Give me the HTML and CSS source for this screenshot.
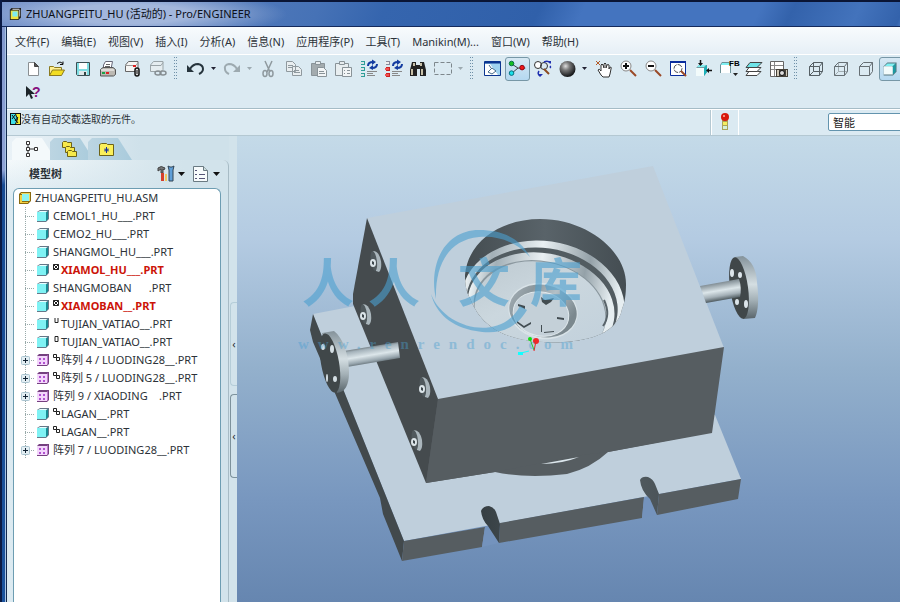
FILE: index.html
```html
<!DOCTYPE html>
<html lang="zh-CN">
<head>
<meta charset="utf-8">
<title>ZHUANGPEITU_HU (活动的) - Pro/ENGINEER</title>
<link rel="stylesheet" href="styles.css">
</head>
<body>
<svg class="defs" aria-hidden="true">
  <symbol id="part" viewBox="0 0 12 12"><path d="M0 2 3 0h9v9l-3 3H0z" fill="#678"/><path d="M1 2 3 1h8L9 2z" fill="#e8ffff"/><path d="M9 3l2-2v8l-2 2z" fill="#168c94"/><path d="M0 2h9v9H0z" fill="#7ff2f4"/></symbol>
  <symbol id="pattern" viewBox="0 0 12 12"><path d="M0 2 2 0h10v10l-2 2H0z" fill="#75407f"/><path d="M0 2h10v9H0z" fill="#f3d6fb"/><path d="M10 2l1-1v9l-1 1z" fill="#c17bd0"/><path d="M2 4h2v2H2zM6 4h2v2H6zM2 8h2v2H2zM6 8h2v2H6z" fill="#b050d0"/></symbol>
  <symbol id="asm" viewBox="0 0 12 12"><path d="M0 2 2 0h10v9l-3 3H0z" fill="#8a6a10"/><path d="M1 3h2v7h6v1H1z" fill="#f4d040"/><path d="M3 2h7v7H3z" fill="#8cf4f2"/><path d="M2 1h9v1H2zM10 2h1v7h-1z" fill="#f0d860"/></symbol>
  <symbol id="plus" viewBox="0 0 9 9"><rect x=".5" y=".5" width="8" height="8" rx="1" fill="#e3eef3" stroke="#a9c3cf"/><path d="M2 4h5v1H2zM4 2h1v5H4z" fill="#123"/></symbol>
  <symbol id="box" viewBox="0 0 6 8"><path d="M1.500 1.500h3v5h-3z" fill="none" stroke="#222"/></symbol>
  <symbol id="cup" viewBox="0 0 6 8"><path d="M1.500 1v4.500h3V1" fill="none" stroke="#222"/></symbol>
  <symbol id="boxes" viewBox="0 0 7 8"><path d="M.5 1.500h3v3h-3zM3.500 4.500h3v3h-3z" fill="none" stroke="#222"/></symbol>
  <symbol id="hatched" viewBox="0 0 7 8"><path d="M.5 1.500h5v5h-5zM.5 1.500l5 5m0-5-5 5" fill="none" stroke="#222"/></symbol>
</svg>

<div class="window">
  <header class="titlebar">
    <svg class="app-icon" viewBox="0 0 14 14"><path d="M1 2 3 0h11v11l-3 3H1z" fill="#222"/><path d="M2 3h9v10H2z" fill="#f1e33c"/><path d="M4 1h8v1H4zM12 2h1v8h-1z" fill="#ddd"/><path d="M4 4h6v6H4z" fill="#7cecf0"/></svg>
    <h1>ZHUANGPEITU_HU (活动的) - Pro/ENGINEER</h1>
  </header>

  <nav class="menubar">
    <a href="#">文件(F)</a><a href="#">编辑(E)</a><a href="#">视图(V)</a><a href="#">插入(I)</a><a href="#">分析(A)</a><a href="#">信息(N)</a><a href="#">应用程序(P)</a><a href="#">工具(T)</a><a href="#">Manikin(M)...</a><a href="#">窗口(W)</a><a href="#">帮助(H)</a>
  </nav>

  <div class="toolbars">
    <span class="grip"></span>
    <div class="tool-rows">
    <div class="tools">
      <button aria-label="新建"><svg viewBox="0 0 25 24"><path d="M7.500 5.500h6l4 4v9h-10z" fill="#fff" stroke="#8a8f92"/><path d="M13.500 5.500v4h4z" fill="#555" stroke="#444"/></svg></button>
      <button aria-label="打开"><svg viewBox="0 0 25 24"><path d="M3.500 19V9.500h4l1 1h7V14" fill="#ffef90" stroke="#8b7a20"/><path d="M3.500 18.500l3-5.500h12l-3 5.500z" fill="#f2dd22" stroke="#8b7a20"/><path d="M11 6.500q3-3 6 0m0-2v3h-3" fill="none" stroke="#111"/></svg></button>
      <button aria-label="保存"><svg viewBox="0 0 25 24"><path d="M5.500 5.500h13v13h-12l-1-1z" fill="#7fdde2" stroke="#3c5055"/><path d="M8 6h8v6H8z" fill="#fff"/><path d="M8 14h8v4H8z" fill="#dfe8ea"/><path d="M13 15h2v3h-2z" fill="#344"/></svg></button>
      <button aria-label="打印"><svg viewBox="0 0 25 24"><path d="M7.500 12V8l2-3.500h7L15 12z" fill="#fff" stroke="#667"/><path d="M10 7.500h4M9 9.500h5" stroke="#666"/><path d="M4.500 12.500 7 10.500h10l2.500 2v5l-2 1.500h-13z" fill="#bcb9b3" stroke="#555"/><path d="M5 13h13" stroke="#fff"/><path d="M6 15h3v2H6z" fill="#1ba34a"/><path d="M10 15h3v2h-3z" fill="#d22"/></svg></button>
      <button aria-label="发送邮件"><svg viewBox="0 0 25 24"><path d="M4.500 14.500V8l3-3.500h9.500v8l-2 2z" fill="#f6f6f4" stroke="#666"/><path d="M4 8.500h11l2-3" fill="none" stroke="#999"/><path d="M12 8h3v2h-3z" fill="#d22"/><rect x="14" y="11" width="4" height="8" rx="2" fill="#ddd" stroke="#111" stroke-width="1.500"/><path d="M16 13v4" stroke="#111"/></svg></button>
      <button aria-label="发送链接"><svg viewBox="0 0 25 24"><path d="M4.500 14.500V8l3-3.500h9.500v8l-2 2z" fill="#e5edf0" stroke="#9aa4a8"/><path d="M4 8.500h11l2-3" fill="none" stroke="#9aa4a8"/><ellipse cx="12" cy="16" rx="3" ry="2" fill="none" stroke="#868e92" stroke-width="1.500"/><ellipse cx="17" cy="16" rx="3" ry="2" fill="none" stroke="#868e92" stroke-width="1.500"/></svg></button>
      <span class="sep"></span>
      <button aria-label="撤消"><svg viewBox="0 0 25 24"><path d="M6 12q3-5 8-5 5 1 5 5 0 3-4 5" fill="none" stroke="#26343c" stroke-width="2"/><path d="M3 8v7h7z" fill="#26343c"/></svg></button>
      <button class="caret" aria-label="撤消列表"><svg viewBox="0 0 11 24"><path d="M2 10h5L4.500 13z" fill="#223"/></svg></button>
      <button aria-label="重做"><svg viewBox="0 0 25 24"><path d="M17 12q-3-5-8-5-5 1-4 5 0 3 4 5" fill="none" stroke="#9daab0" stroke-width="2"/><path d="M20 8v7h-7z" fill="#9daab0"/></svg></button>
      <button class="caret" aria-label="重做列表"><svg viewBox="0 0 11 24"><path d="M2 10h5L4.500 13z" fill="#9daab0"/></svg></button>
      <button aria-label="剪切"><svg viewBox="0 0 25 24"><path d="M9 4l5 11M16 4l-5 11" stroke="#8f999e" stroke-width="1.500"/><ellipse cx="9" cy="16.500" rx="2" ry="3" fill="none" stroke="#8f999e" stroke-width="1.500"/><ellipse cx="15" cy="16.500" rx="2" ry="3" fill="none" stroke="#8f999e" stroke-width="1.500"/></svg></button>
      <button aria-label="复制"><svg viewBox="0 0 25 24"><g fill="#e9eef0" stroke="#8f999e"><path d="M5.500 4.500h6l3 3v7h-9zM11.500 9.500h6l3 3v6h-9z"/><path d="M7 8.500h5M7 10.500h4M13 13.500h5M13 15.500h6"/></g></svg></button>
      <button aria-label="粘贴"><svg viewBox="0 0 25 24"><path d="M5.500 6.500h13v12h-13z" fill="#a3abae" stroke="#899398"/><path d="M9.500 4.500h5v3h-5z" fill="#e7ecee" stroke="#899398"/><path d="M11.500 10.500h6l3 3v6h-9z" fill="#f2f5f6" stroke="#899398"/><path d="M13 14.500h5M13 16.500h6" stroke="#899398"/></svg></button>
      <button aria-label="选择性粘贴"><svg viewBox="0 0 25 24"><path d="M4.500 6.500h13v12h-13z" fill="#e8eef0" stroke="#899398"/><path d="M8.500 4.500h5v3h-5z" fill="#e7ecee" stroke="#899398"/><path d="M11.500 10.500h9v9h-9z" fill="#f2f5f6" stroke="#899398"/><path d="M13 13.500h1m2 0h3m-6 3h1m2 0h3" stroke="#899398"/></svg></button>
      <button aria-label="再生"><svg viewBox="0 0 25 24"><path d="M5 4h4v4H5zM5 10h4v4H5zM5 16h4v4H5z" fill="#2e9d98"/><path d="M4 5h4v2H4zM4 11h4v2H4zM4 17h4v2H4z" fill="#d8e4e6"/><path d="M12 9q0-4 5-4m4 2q0 4-5 4" fill="none" stroke="#143ca0" stroke-width="2"/><path d="M16 2.500l4 2.500-4 3zM17 8v5l-4-2z" fill="#143ca0"/><path d="M11 14.500h10M11 16.500h6M11 18.500h8" stroke="#888"/></svg></button>
      <button aria-label="自定义再生"><svg viewBox="0 0 25 24"><path d="M5 4h4v4H5z" fill="#889"/><path d="M5 10h4v4H5zM5 16h4v4H5z" fill="#c22"/><path d="M4 5h4v2H4z" fill="#eee"/><path d="M4 11h4v2H4zM4 17h4v2H4z" fill="#f05050"/><path d="M12 9q0-4 5-4m4 2q0 4-5 4" fill="none" stroke="#143ca0" stroke-width="2"/><path d="M16 2.500l4 2.500-4 3zM17 8v5l-4-2z" fill="#143ca0"/><path d="M11 14.500h10M11 16.500h6M11 18.500h8" stroke="#888"/></svg></button>
      <button aria-label="查找"><svg viewBox="0 0 25 24"><path d="M6 5h4v3h4V5h4l2 8v6h-6v-7h-3v7H4v-6z" fill="#222"/><path d="M6 12v6M16 12v6M8 6v3M15 6v3" stroke="#c8c0a8" stroke-width="2"/></svg></button>
      <button aria-label="选取框"><svg viewBox="0 0 25 24"><path d="M3.500 5.500h17v12h-17z" fill="none" stroke="#7d878c" stroke-dasharray="4 2"/></svg></button>
      <button class="caret" aria-label="选取列表"><svg viewBox="0 0 11 24"><path d="M2 10h5L4.500 13z" fill="#9daab0"/></svg></button>
      <span class="sep"></span>
      <button aria-label="重画"><svg viewBox="0 0 25 24"><path d="M4.500 4.500h16v14h-16z" fill="#9fd2f0" stroke="#0b3590"/><path d="M5 5h15v1.500H5z" fill="#0b3590"/><path d="M5 18V7h5l8 11z" fill="#fff"/><path d="M9 8l2 3M8 15l4-4 4 3-4 3z" stroke="#456a8a" fill="#fff"/></svg></button>
      <button class="pressed" aria-label="旋转中心"><svg viewBox="0 0 25 24"><path d="M7 7l6 4h8M13 11l-6 5" fill="none" stroke="#333"/><circle cx="6" cy="6" r="2.500" fill="#16c020" stroke="#064"/><circle cx="17.500" cy="10.500" r="2.500" fill="#f01818" stroke="#801"/><circle cx="6" cy="16.500" r="2.500" fill="#18e0e8" stroke="#067"/></svg></button>
      <button aria-label="定向模式"><svg viewBox="0 0 25 24"><circle cx="8" cy="8" r="3.500" fill="#fff" stroke="#333"/><circle cx="14" cy="9" r="3.500" fill="none" stroke="#333"/><path d="M14 12l5 5" stroke="#8a4a20" stroke-width="2"/><path d="M14 5q4-2 6 1m0 5q1-1 0-2M9 14q-2 3 1 5" fill="none" stroke="#2030b0" stroke-width="1.500"/><path d="M18 4h3v3zM8 17h5l-3 3z" fill="#2030b0"/></svg></button>
      <button aria-label="外观库"><svg viewBox="0 0 25 24"><defs><radialGradient id="ball" cx=".38" cy=".32" r=".65"><stop offset="0" stop-color="#ddd"/><stop offset=".4" stop-color="#777"/><stop offset="1" stop-color="#1a1c1e"/></radialGradient></defs><circle cx="12.500" cy="12" r="8" fill="url(#ball)"/></svg></button>
      <button class="caret" aria-label="外观列表"><svg viewBox="0 0 11 24"><path d="M2 10h5L4.500 13z" fill="#223"/></svg></button>
      <button aria-label="平移"><svg viewBox="0 0 25 24"><path d="M10 18l-3-5q1-2 3 1V8q1-2 2 0l1 3V7q1-2 2 0v4l1-3q1-1 2 0v4l1-2q2 0 1 2l-1 5-1 3h-6z" fill="#fff" stroke="#333"/><path d="M5 4l4 4M9 4 5 8" stroke="#b05a28"/></svg></button>
      <button aria-label="放大"><svg viewBox="0 0 25 24"><path d="M14 13l6 6" stroke="#9a4a28" stroke-width="2"/><circle cx="10" cy="9" r="5" fill="#fff" stroke="#888"/><path d="M7 9h6M10 6v6" stroke="#111" stroke-width="2"/></svg></button>
      <button aria-label="缩小"><svg viewBox="0 0 25 24"><path d="M14 13l6 6" stroke="#9a4a28" stroke-width="2"/><circle cx="10" cy="9" r="5" fill="#fff" stroke="#888"/><path d="M7 9h6" stroke="#111" stroke-width="2"/></svg></button>
      <button aria-label="重新调整"><svg viewBox="0 0 25 24"><path d="M4.500 4.500h15v14h-15z" fill="#fff" stroke="#0a2c9c"/><path d="M4 4h16v2H4z" fill="#0a2c9c"/><circle cx="12" cy="11.500" r="4" fill="#fff" stroke="#555" stroke-dasharray="5 1"/><path d="M15 14l5 5" stroke="#9a4a28" stroke-width="2"/></svg></button>
      <button aria-label="重定向"><svg viewBox="0 0 25 24"><path d="M5 11l3-3h8v7l-3 4H5z" fill="#78969e"/><path d="M5 11h8v8H5z" fill="#f2fbfb"/><path d="M6 10l2-2h7l-2 2z" fill="#7ff0f2"/><path d="M13 11l3-3v7l-3 4z" fill="#1bb0b8"/><path d="M9.500 3v5M21 13.500h-4" stroke="#111" stroke-width="1.500"/><path d="M7 6h5L9.500 9zM18 11v5l-3-2.500z" fill="#111"/></svg></button>
      <button aria-label="已保存视图"><svg viewBox="0 0 25 24"><path d="M4 8l2-3h7l2 3v8H4z" fill="#6c9096"/><path d="M5 8h9v8H5z" fill="#fff"/><path d="M6 6h7l1 2H5z" fill="#7ff0f2"/><path d="M17 16h5l-2.500 3z" fill="#222"/><text class="micro" x="13" y="9">FB</text></svg></button>
      <button aria-label="层"><svg viewBox="0 0 25 24"><g stroke="#444"><path d="M5 18.500l3-4h12l-4 4z" fill="#fff"/><path d="M5 14.500l3-4h12l-4 4z" fill="#fff"/><path d="M5 10.500l4-5h12l-5 5z" fill="#6ee4e8"/></g></svg></button>
      <button aria-label="视图管理器"><svg viewBox="0 0 25 24"><path d="M4.500 4.500h13v15h-13z" fill="#fff" stroke="#666"/><path d="M8.500 5v14M5 8.500h12M5 12.500h12" stroke="#888"/><path d="M10 12h12v8H10z" fill="#46423a"/><circle cx="16" cy="16" r="2.500" fill="#ddd" stroke="#111"/><path d="M11 13h2v6h-2zM20 13h1v6h-1z" fill="#cfc8b8"/></svg></button>
      <span class="sep"></span>
      <button aria-label="线框"><svg viewBox="0 0 25 24"><path d="M5.500 9.500h10v9h-10zM9.500 5.500h9v9h-9zM5.500 9.500l4-4M15.500 9.500l3-4M15.500 18.500l3-4M5.500 18.500l4-4" fill="none" stroke="#555f64"/></svg></button>
      <button aria-label="隐藏线"><svg viewBox="0 0 25 24"><path d="M9.500 5.500v9h9M5.500 18.500l4-4" fill="none" stroke="#a2adb2"/><path d="M5.500 9.500h10v9h-10zM5.500 9.500l4-4h9v9l-3 4M15.500 9.500l3-4" fill="none" stroke="#666f74"/></svg></button>
      <button aria-label="消隐"><svg viewBox="0 0 25 24"><path d="M5.500 9.500h10v9h-10zM5.500 9.500l4-4h9v9l-3 4M15.500 9.500l3-4" fill="none" stroke="#666f74"/></svg></button>
      <button class="pressed" aria-label="着色"><svg viewBox="0 0 25 24"><path d="M4 9l4-4h10v10l-4 4H4z" fill="#56777f"/><path d="M5 9l3-3h9l-3 3z" fill="#7ef0f2"/><path d="M4 9h10v9H4z" fill="#f2fbfb"/><path d="M14 9l3-3v9l-3 3z" fill="#1b9aa2"/></svg></button>
    </div>
    <div class="tools">
      <button aria-label="上下文帮助"><svg viewBox="0 0 25 24"><path d="M5 5v11l3-3 2 5 2-1-2-4h4z" fill="#1c2428"/><text class="help-mark" x="11" y="16">?</text></svg></button>
    </div>
    </div>
  </div>

  <div class="status">
    <svg class="status-icon" viewBox="0 0 11 12"><path d="M0 0h11v12H0z" fill="#111"/><path d="M1 1h4l2 5-2 5H1z" fill="#40dfe8"/><path d="M6 1h4v10H6l2-5z" fill="#f4ec30"/><path d="M2 2l6 8M5 2 2 6m6-2L5 8" stroke="#111"/></svg>
    <output>没有自动交截选取的元件。</output>
    <span class="signal"><svg viewBox="0 0 10 18"><path d="M2 6h6v11H2z" fill="#a9a458"/><path d="M3 9h4v3H3z" fill="#f5ee60"/><path d="M3 13h4v3H3z" fill="#d6f0d8"/><circle cx="5" cy="4" r="4" fill="#d8180c"/><circle cx="4" cy="3" r="1" fill="#ffb0a0"/></svg></span>
    <select class="filter" aria-label="选取过滤器"><option>智能</option></select>
  </div>

  <main class="work">
    <section class="navigator">
      <div class="tabs">
        <button class="tab active" aria-label="模型树"><svg viewBox="0 0 16 18"><path d="M2.500 1.500h3v3h-3zM2.500 7.500h3v3h-3zM2.500 13.500h3v3h-3zM10.500 7.500h3v3h-3zM6 9h4M4 5v2M4 11v2" fill="#fff" stroke="#333"/></svg></button>
        <button class="tab" aria-label="文件夹浏览器"><svg viewBox="0 0 18 18"><g fill="#f7e94a" stroke="#6d6318"><path d="M1.500 2.500l1-1h3l1 1h4v5h-9z"/><path d="M4.500 7.500l1-1h3l1 1h4v5h-9z"/><path d="M6.500 11.500l1-1h3l1 1h4v5h-9z"/></g></svg></button>
        <button class="tab" aria-label="收藏夹"><svg viewBox="0 0 18 18"><path d="M.5 4.500v11h14v-11h-6l-1-1h-5z" fill="#fbf05a" stroke="#6d6318"/><path d="M7.500 7v6M5 10h5M6 8.500l3 3m0-3-3 3" stroke="#18339a"/></svg></button>
      </div>
      <div class="panel">
        <div class="panel-head">
          <h2>模型树</h2>
          <button aria-label="设置"><svg viewBox="0 0 21 20"><path d="M1 4q3-3 7 0l-1 2-1-1v4H4V5L1 7z" fill="#777" stroke="#444"/><path d="M4 9h3v8H4z" fill="#d6402c"/><path d="M12 17V6l-1-4 2 1h2l2-1-1 4v11z" fill="#5f9fd8" stroke="#345"/><path d="M8 10h2v7H8z" fill="#f0c860"/></svg><svg class="drop" viewBox="0 0 8 20"><path d="M0 8h7l-3.500 4z" fill="#111"/></svg></button>
          <button aria-label="显示"><svg viewBox="0 0 21 20"><path d="M1.500 2.500h10l4 4v11h-14z" fill="#f7fbfc" stroke="#6a7a82"/><path d="M11.500 2.500v4h4" fill="#cdd" stroke="#6a7a82"/><path d="M3 6.500h2M3 10.500h2M3 14.500h2M7 10.500h6M7 14.500h6" stroke="#557"/></svg><svg class="drop" viewBox="0 0 8 20"><path d="M0 8h7l-3.500 4z" fill="#111"/></svg></button>
        </div>
        <div class="tree">
          <div class="row root"><svg class="ico"><use href="#asm"/></svg>ZHUANGPEITU_HU.ASM</div>
          <ul>
            <li class="row"><svg class="ico"><use href="#part"/></svg>CEMOL1_HU___.PRT</li>
            <li class="row"><svg class="ico"><use href="#part"/></svg>CEMO2_HU___.PRT</li>
            <li class="row"><svg class="ico"><use href="#part"/></svg>SHANGMOL_HU___.PRT</li>
            <li class="row failed"><svg class="ico"><use href="#part"/></svg><svg class="mark"><use href="#hatched"/></svg>XIAMOL_HU___.PRT</li>
            <li class="row"><svg class="ico"><use href="#part"/></svg>SHANGMOBAN      .PRT</li>
            <li class="row failed"><svg class="ico"><use href="#part"/></svg><svg class="mark"><use href="#hatched"/></svg>XIAMOBAN__.PRT</li>
            <li class="row"><svg class="ico"><use href="#part"/></svg><svg class="mark"><use href="#cup"/></svg>TUJIAN_VATIAO__.PRT</li>
            <li class="row"><svg class="ico"><use href="#part"/></svg><svg class="mark"><use href="#box"/></svg>TUJIAN_VATIAO__.PRT</li>
            <li class="row group"><button class="plus" aria-label="展开"><svg viewBox="0 0 9 9"><use href="#plus"/></svg></button><svg class="ico"><use href="#pattern"/></svg><svg class="mark"><use href="#boxes"/></svg>阵列 4 / LUODING28__.PRT</li>
            <li class="row group"><button class="plus" aria-label="展开"><svg viewBox="0 0 9 9"><use href="#plus"/></svg></button><svg class="ico"><use href="#pattern"/></svg><svg class="mark"><use href="#boxes"/></svg>阵列 5 / LUODING28__.PRT</li>
            <li class="row group"><button class="plus" aria-label="展开"><svg viewBox="0 0 9 9"><use href="#plus"/></svg></button><svg class="ico"><use href="#pattern"/></svg>阵列 9 / XIAODING    .PRT</li>
            <li class="row"><svg class="ico"><use href="#part"/></svg><svg class="mark"><use href="#boxes"/></svg>LAGAN__.PRT</li>
            <li class="row"><svg class="ico"><use href="#part"/></svg><svg class="mark"><use href="#boxes"/></svg>LAGAN__.PRT</li>
            <li class="row group"><button class="plus" aria-label="展开"><svg viewBox="0 0 9 9"><use href="#plus"/></svg></button><svg class="ico"><use href="#pattern"/></svg>阵列 7 / LUODING28__.PRT</li>
          </ul>
        </div>
      </div>
    </section>
    <div class="splitter">
      <button class="handle" aria-label="折叠浏览器">‹</button>
      <button class="handle dark" aria-label="折叠导航器">‹</button>
    </div>

    <section class="viewport">
      <svg viewBox="237 136 663 466" preserveAspectRatio="xMinYMin meet" role="img" aria-label="装配模型">
        <defs>
          <linearGradient id="rodL" x1="370" y1="346" x2="373" y2="364" gradientUnits="userSpaceOnUse"><stop offset="0" stop-color="#6d777c"/><stop offset=".15" stop-color="#a4b2ba"/><stop offset=".5" stop-color="#dce6ea"/><stop offset=".8" stop-color="#98a6ae"/><stop offset="1" stop-color="#59656b"/></linearGradient>
          <linearGradient id="rodR" x1="720" y1="283" x2="723" y2="301" gradientUnits="userSpaceOnUse"><stop offset="0" stop-color="#87939a"/><stop offset=".4" stop-color="#dce6ea"/><stop offset=".7" stop-color="#a4b0b7"/><stop offset="1" stop-color="#3f4b50"/></linearGradient>
          <linearGradient id="rim" x1="0" y1="0" x2="0" y2="1"><stop offset="0" stop-color="#84929a"/><stop offset=".45" stop-color="#d4dee2"/><stop offset=".7" stop-color="#a3b0b6"/><stop offset="1" stop-color="#58646a"/></linearGradient>
          <linearGradient id="bore" x1="0" y1="0" x2="1" y2="0"><stop offset="0" stop-color="#434b4f"/><stop offset=".5" stop-color="#596369"/><stop offset="1" stop-color="#434c51"/></linearGradient>
          <linearGradient id="ring" x1="0" y1="0" x2="1" y2="0"><stop offset="0" stop-color="#eef4f6"/><stop offset=".15" stop-color="#a3b0b7"/><stop offset=".45" stop-color="#e9f0f3"/><stop offset=".75" stop-color="#94a1a8"/><stop offset=".95" stop-color="#e6eef1"/></linearGradient>
          <linearGradient id="dish" x1="0" y1="0" x2="1" y2="1"><stop offset="0" stop-color="#bcc8cf"/><stop offset=".4" stop-color="#cbd7de"/><stop offset="1" stop-color="#bfcfdb"/></linearGradient>
          <linearGradient id="hub" x1="0" y1="0" x2="1" y2=".3"><stop offset="0" stop-color="#a5b1b8"/><stop offset=".3" stop-color="#8b979d"/><stop offset=".6" stop-color="#b4c0c7"/><stop offset="1" stop-color="#7b888e"/></linearGradient>
          <linearGradient id="slot" x1="0" y1="0" x2="1" y2="0"><stop offset="0" stop-color="#363f43"/><stop offset=".6" stop-color="#5b656a"/><stop offset="1" stop-color="#4b5459"/></linearGradient>
          <clipPath id="boreClip"><path d="M465 275C468 240 503 219 540 219c47 0 86 32 86 65 0 10-1 18-4 25-2 12-12 23-29 28-30 9-78 7-100-9-13-9-19-20-23-30-4-6-5-15-5-23z"/></clipPath>
          <g id="bolt"><path d="M0-11q6 0 8 10 1 8-2 11l-3-1z" fill="#aab6bc"/><ellipse cx="1" cy="-1" rx="3" ry="10" transform="rotate(-8)" fill="#50595d"/><ellipse cx="0" cy="1" rx="3" ry="4" fill="#dce5e9"/><path d="M-1-1l2 1v3l-2-1z" fill="#3d474c"/></g>
        </defs>

        <g class="base">
          <path d="M313 314l42-8 360 109 26 64-337 62z" fill="#bfcfdc"/>
          <path d="M313 314l91 227-2 20-19-47-3-16-67-156-3-12z" fill="#42494c"/>
          <path d="M404 541l81-14-3 20-80 14zM500 523l144-26-2 21-143 25zM659 494l82-15-3 20-81 16z" fill="#565d61"/>
          <path d="M485 527l4-1 10 17-17 4zM644 498l6-1 7 18-15 3z" fill="#7493bd"/>
          <path d="M481 511q2-5 8-5 5 1 7 6l4 12-1 19-11-17q-6-6-7-15zM640 480q2-4 8-3 5 2 7 7l4 10-2 21-7-16q-9-8-10-19z" fill="url(#slot)"/>
        </g>
        <g class="block">
          <path d="M426 483l69-11q32 7 72 2 24-6 41-22l104-20V400H426z" fill="#565d61"/>
          <path d="M367 218l286-52 71 182-286 51z" fill="#bfcfdc"/>
          <path d="M367 218l71 181-12 84-73-179v-10z" fill="#454b4e"/>
          <path d="M438 399l286-52-12 86-104 19-26 3-87 17-69 11z" fill="#565d61"/>
          <path d="M541 464l38-7q-17 7-38 7z" fill="#dce7ed"/>
        </g>
        <g clip-path="url(#boreClip)">
          <path d="M460 210h170v140H460z" fill="url(#bore)"/>
          <ellipse cx="543" cy="304" rx="82" ry="63" transform="rotate(8 543 304)" fill="url(#ring)"/>
          <ellipse cx="542" cy="305" rx="76" ry="57" transform="rotate(8 542 305)" fill="#525c61"/>
          <ellipse cx="541" cy="308" rx="74" ry="55" transform="rotate(10 541 308)" fill="url(#ring)"/>
          <ellipse cx="540" cy="310" rx="67" ry="49" transform="rotate(12 540 310)" fill="#8b989f"/>
          <ellipse cx="540" cy="312" rx="66" ry="50" transform="rotate(12 540 312)" fill="url(#dish)"/>
          <path d="M604 300q7 15-1 26" fill="none" stroke="#59646a" stroke-width="2"/>
        </g>
        <ellipse cx="543" cy="311" rx="35" ry="28" transform="rotate(12 543 311)" fill="#d9e3e8"/>
        <ellipse cx="543" cy="311" rx="34" ry="26" transform="rotate(12 543 311)" fill="url(#hub)"/>
        <ellipse cx="541" cy="314" rx="28" ry="22" transform="rotate(12 541 314)" fill="#c4d0d8" stroke="#dfe8ec"/>
        <path d="M541 297l4 3 9-2-3 4-5 3-4-3zM518 304l7 2v3l-7-3zM517 321l7 5 7-4v2l-7 4-7-5zM541 325v7h1v-7zM544 333l10-1v-1l-10 1zM557 317l7 1v2l-7-1z" fill="#424c51"/>

        <g class="flange">
          <path d="M344 351l54-9 2 16-53 9z" fill="url(#rodL)"/>
          <path d="M322 333l12-2c9 7 15 24 15 42 0 12-4 19-12 20z" fill="url(#rim)"/>
          <ellipse cx="330" cy="363" rx="9" ry="30" transform="rotate(-10 330 363)" fill="#404749"/>
          <g fill="#d4dee3"><ellipse cx="323" cy="347" rx="2" ry="3"/><ellipse cx="332" cy="349" rx="2" ry="4"/><ellipse cx="327" cy="378" rx="1" ry="4"/><ellipse cx="335" cy="379" rx="2" ry="3"/></g>
        </g>
        <g class="flange">
          <path d="M735 257l8-1q13 7 14 26 3 25-2 36l-12 1z" fill="url(#rim)"/>
          <ellipse cx="739" cy="288" rx="9" ry="31" transform="rotate(-8 739 288)" fill="#404749"/>
          <g fill="#dce5ea"><ellipse cx="732" cy="273" rx="2" ry="4"/><ellipse cx="740" cy="275" rx="2" ry="3"/><ellipse cx="737" cy="302" rx="2" ry="3"/><ellipse cx="746" cy="304" rx="2" ry="4"/></g>
          <path d="M700 286l39-7q3 9 1 18l-34 6z" fill="url(#rodR)"/>
        </g>
        <use href="#bolt" x="373" y="262"/><use href="#bolt" x="363" y="315"/><use href="#bolt" x="422" y="388"/><use href="#bolt" x="414" y="441"/>

        <g class="triad" fill="none"><path d="M530 339l4 11" stroke="#2c2"/><path d="M536 341l-2 10" stroke="#e22"/><path d="M521 353l8-2" stroke="#1ff" stroke-width="1"/><circle cx="530" cy="339" r="2" fill="#1d1"/><circle cx="536" cy="341" r="3" fill="#f02828"/><path d="M518 352h5v3h-5z" fill="#1ff"/></g>

        <g class="watermark">
          <path d="M436 299C428 264 445 230 479 230c23 0 41 8 51 27-14-15-32-22-51-20-32 3-44 30-43 62z"/>
          <path d="M431 294c14 36 70 48 89 12l7 4c-14 24-36 24-51 21-25-4-40-18-45-37z"/>
          <text x="302" y="302" class="brand">人</text><text x="368" y="302" class="brand">人</text><text x="458" y="302" class="brand">文</text><text x="530" y="302" class="brand">库</text>
          <text x="298" y="349" class="site">www.renrendoc.com</text>
        </g>
      </svg>
    </section>
  </main>
</div>
</body>
</html>
```
FILE: styles.css
```css
* { box-sizing: border-box; }

body {
  margin: 0;
  overflow: hidden;
  color: #2c3238;
  font: 11px/18px "Noto Sans", "Noto Sans CJK SC", sans-serif;
}

.defs { position: absolute; width: 0; height: 0; }
h1, h2, ul { margin: 0; padding: 0; font-size: 11px; }
svg { display: block; }

button {
  padding: 0;
  border: 0;
  background: none;
  color: inherit;
  font: inherit;
}

.window {
  display: flex;
  flex-direction: column;
  height: 100vh;
  padding-left: 7px;
  background:
    linear-gradient(90deg, #0a1a44 0 2px, transparent 2px 5px, #a8c4e4 5px 6px, #12284e 6px 7px, transparent 7px),
    linear-gradient(#7e96cc 0, #8fa3d6 170px, #174a92 185px, #1b539d 100%);
}

.titlebar {
  display: flex;
  align-items: center;
  gap: 5px;
  flex: none;
  height: 27px;
  margin-left: -5px;
  padding-left: 7px;
  border-top: 2px solid #0a1535;
  border-bottom: 1px solid #142a5c;
  background:
    radial-gradient(ellipse 160px 24px at 125px 12px, #a3b7dc 40%, transparent),
    linear-gradient(115deg, #6d8cc6 0, #4672b6 290px, #3565ae 350px, #3060aa 490px, #4474bf 530px, #4474bf 690px, #3362ab 720px, #4373bc 780px, #3362ab 820px, #4373bc 100%);
}
.titlebar h1 { color: #0c1018; font-weight: 400; }
.app-icon { width: 12px; height: 12px; }

.menubar {
  display: flex;
  flex: none;
  gap: 12px;
  height: 28px;
  padding: 6px 8px 0;
  border-bottom: 1px solid #fff;
  background: linear-gradient(#f8fbfd, #e6eff6);
}
.menubar a { color: #2c3238; text-decoration: none; white-space: nowrap; }

.toolbars {
  display: flex;
  flex: none;
  padding: 2px 0 3px 4px;
  overflow: hidden;
  border-bottom: 1px solid #a5bcc6;
  background: #dbeaf2;
}
.grip, .sep { background: conic-gradient(#6f90a8 25%, transparent 0) 0 0 / 2px 3px; }
.grip { width: 2px; margin-right: 10px; }
.tools { display: flex; height: 24px; }
.tools button { flex: none; width: 25px; height: 24px; }
.tools button.caret { width: 11px; }
.tools svg { width: 100%; height: 100%; }
.tools .pressed {
  border: 1px solid #7797a6;
  border-radius: 3px;
  background: linear-gradient(#d6e8f3, #b4d8f0);
}
.sep {
  flex: none;
  width: 4px;
  margin: 0 7px 0 2px;
}
.micro { font: bold 8px "Liberation Sans", sans-serif; }
.help-mark { fill: #86107e; font: bold 14px "Liberation Sans", sans-serif; }

.status {
  display: flex;
  flex: none;
  height: 27px;
  padding-left: 3px;
  overflow: hidden;
  border-top: 1px solid #fff;
  border-bottom: 1px solid #b4c8d2;
  background: #dbeaf2;
}
.status-icon { width: 11px; height: 12px; margin-top: 3px; }
.status output { flex: 1; font-size: 10px; }
.signal {
  width: 28px;
  padding: 3px 8px;
  border: solid #fff;
  border-width: 0 1px;
  box-shadow: -1px 0 #b4c8d2;
}
.signal svg { width: 10px; height: 18px; }
.filter {
  width: 90px;
  height: 18px;
  margin: 3px -18px 0 89px;
  padding: 0 4px;
  border: 1px solid #6394ae;
  border-radius: 2px;
  background: #fff;
  color: #222;
  font: inherit;
  appearance: none;
}

.work { display: flex; flex: 1; min-height: 0; }
.navigator {
  display: flex;
  flex-direction: column;
  flex: none;
  width: 222px;
  background: linear-gradient(90deg, #eaf2f7, #cfe1ea 60%);
}
.tabs { display: flex; height: 24px; padding: 2px 0 0 5px; }
.tab {
  width: 44px;
  margin-right: -6px;
  padding-left: 11px;
  background: linear-gradient(90deg, #bcd5e2, #a9cbdc);
  clip-path: polygon(0 4px, 4px 0, 30px 0, 100% 100%, 0 100%);
}
.tab.active { background: #f4f9fb; }
.tab svg { width: 18px; height: 18px; }
.panel {
  display: flex;
  flex-direction: column;
  flex: 1;
  min-height: 0;
  padding: 0 7px 0 6px;
  border-right: 1px solid #a7bbc5;
  border-radius: 0 6px 0 0;
  background: linear-gradient(90deg, transparent, #d2e3eb 80%), linear-gradient(#f4f9fb, #dceaf1 40px);
}
.panel-head { display: flex; align-items: center; gap: 6px; height: 28px; }
.panel-head h2 { flex: 1; padding-left: 16px; }
.panel-head button { display: flex; }
.panel-head svg { flex: none; width: 21px; height: 20px; }
.panel-head .drop { width: 8px; }

.tree {
  flex: 1;
  min-height: 0;
  overflow: hidden;
  border: 1px solid #6d9db2;
  border-bottom: 0;
  border-radius: 6px 6px 0 0;
  background: #fff;
}
.row {
  display: flex;
  align-items: center;
  height: 18px;
  white-space: pre;
}
.root { gap: 4px; padding-left: 5px; }
.tree ul { margin-left: 11px; list-style: none; }
.tree li {
  padding-left: 12px;
  background:
    repeating-linear-gradient(#9aa 0 1px, transparent 1px 2px) 0 0 / 1px 100% no-repeat,
    repeating-linear-gradient(90deg, #9aa 0 1px, transparent 1px 2px) 0 9px / 10px 1px no-repeat;
}
.tree li .ico { margin-right: 4px; }
.tree li.group { padding-left: 0; }
.plus { width: 9px; height: 9px; margin: 0 7px 0 -4px; }
.plus svg { width: 9px; height: 9px; }
.ico { flex: none; width: 12px; height: 12px; }
.mark { flex: none; width: 7px; height: 8px; margin: -6px 1px 0 0; }
.failed { color: #cc1408; font-weight: 700; }

.splitter {
  display: flex;
  flex-direction: column;
  gap: 8px;
  flex: none;
  width: 8px;
  padding-top: 166px;
  background: #d2e3eb;
}
.handle {
  height: 84px;
  margin-left: 1px;
  border: 1px solid #b5cdd8;
  border-right: 0;
  border-radius: 4px 0 0 4px;
}
.handle.dark { border-color: #7d929c; }

.viewport {
  flex: 1;
  min-width: 0;
  background: linear-gradient(#c4dae8, #b4cbe2 22%, #93b0cc 50%, #7897bf 78%, #6686b0);
}
.viewport svg { width: 100%; height: 100%; }
.watermark { fill: #4ba0d0; opacity: .6; }
.brand { font: 700 52px "Noto Sans CJK SC", sans-serif; }
.site { font: bold 15px "Liberation Serif", serif; letter-spacing: 9px; opacity: .7; }
```
